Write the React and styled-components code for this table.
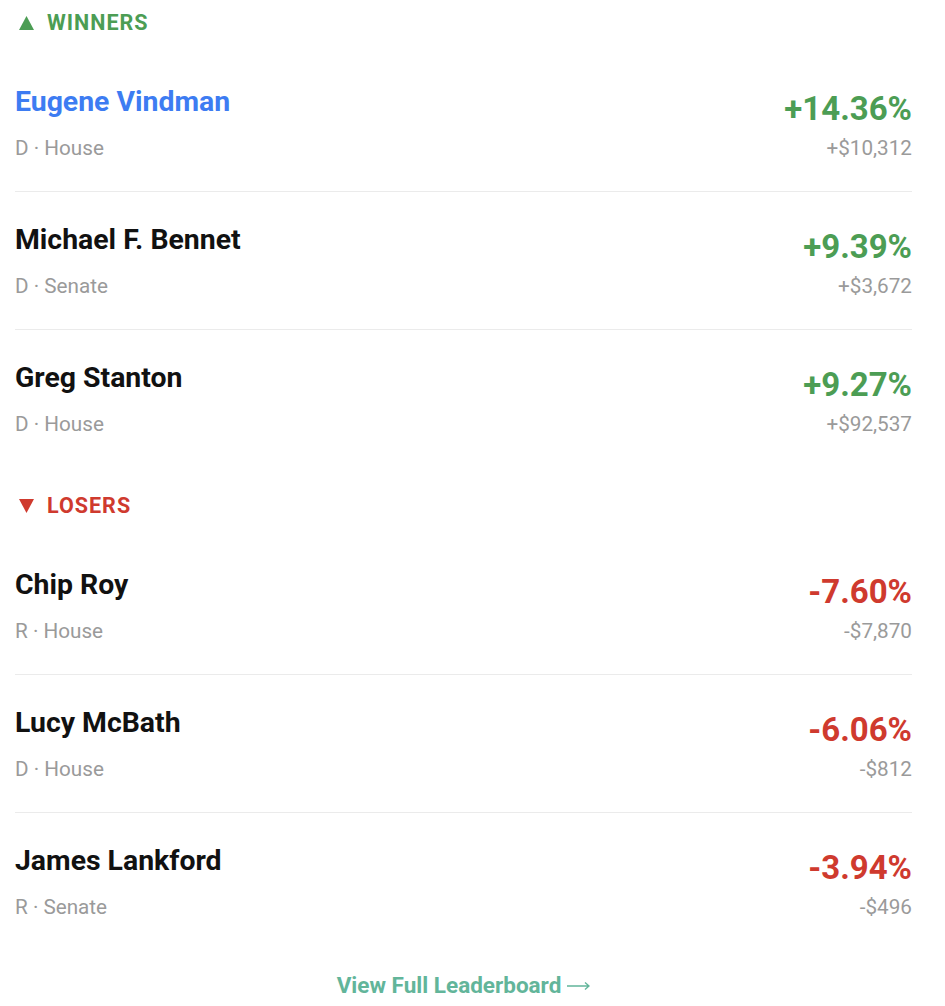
import React from "react";
import styled, { createGlobalStyle } from "styled-components";

const GlobalStyle = createGlobalStyle`
  body {
    margin: 0;
    background: #fff;
    font-family: Roboto, "Liberation Sans", sans-serif;
  }
`;

const GREEN = "#4c9d54";
const RED = "#cf3a2e";

const Wrapper = styled.div`
  width: 897px;
  padding: 11px 0 0 15px;
`;

const Section = styled.section`
  & + & {
    margin-top: 27px;
  }
`;

const Heading = styled.h3`
  display: flex;
  align-items: center;
  gap: 13px;
  margin: 0 0 19px;
  padding-left: 4px;
  font-size: 21.5px;
  line-height: 24px;
  font-weight: 700;
  letter-spacing: 1px;
  text-transform: uppercase;
  color: ${(p) => (p.$up ? GREEN : RED)};
`;

const Triangle = styled.svg`
  width: 15px;
  height: 14px;
  flex-shrink: 0;
  fill: currentColor;
`;

const Row = styled.div`
  display: flex;
  justify-content: space-between;
  align-items: flex-end;
  padding: 31px 0 30px;
  border-bottom: 1px solid #ebebeb;
  &:last-child {
    border-bottom: none;
  }
`;

const Left = styled.div`
  display: flex;
  flex-direction: column;
  gap: 16px;
`;

const Right = styled.div`
  display: flex;
  flex-direction: column;
  align-items: flex-end;
  gap: 7px;
`;

const Name = styled.a`
  font-size: 28.4px;
  line-height: 34px;
  font-weight: 700;
  color: ${(p) => (p.$active ? "#3d7cf2" : "#111")};
  text-decoration: none;
`;

const Meta = styled.div`
  font-size: 20.7px;
  line-height: 26px;
  color: #9a9a9a;
`;

const Pct = styled.div`
  font-size: 33px;
  line-height: 39px;
  font-weight: 700;
  color: ${(p) => (p.$up ? GREEN : RED)};
`;

const Footer = styled.div`
  display: flex;
  justify-content: center;
  padding: 22px 0 20px;
`;

const FooterLink = styled.a`
  display: flex;
  align-items: center;
  gap: 6px;
  font-size: 22.5px;
  font-weight: 700;
  color: #62b59a;
  text-decoration: none;
`;

const Arrow = styled.svg`
  width: 23px;
  height: 10px;
  margin-top: 2px;
  stroke: currentColor;
  stroke-width: 1.4;
  fill: none;
`;

const WINNERS = [
  { name: "Eugene Vindman", meta: "D · House", pct: "+14.36%", amt: "+$10,312", active: true },
  { name: "Michael F. Bennet", meta: "D · Senate", pct: "+9.39%", amt: "+$3,672" },
  { name: "Greg Stanton", meta: "D · House", pct: "+9.27%", amt: "+$92,537" },
];

const LOSERS = [
  { name: "Chip Roy", meta: "R · House", pct: "-7.60%", amt: "-$7,870" },
  { name: "Lucy McBath", meta: "D · House", pct: "-6.06%", amt: "-$812" },
  { name: "James Lankford", meta: "R · Senate", pct: "-3.94%", amt: "-$496" },
];

const Board = ({ title, up, items }) => (
  <Section>
    <Heading $up={up}>
      <Triangle viewBox="0 0 15 14">
        <path d={up ? "M7.5 0 L15 14 L0 14 Z" : "M0 0 L15 0 L7.5 14 Z"} />
      </Triangle>
      {title}
    </Heading>
    {items.map((m) => (
      <Row key={m.name}>
        <Left>
          <Name href="#" $active={m.active}>{m.name}</Name>
          <Meta>{m.meta}</Meta>
        </Left>
        <Right>
          <Pct $up={up}>{m.pct}</Pct>
          <Meta>{m.amt}</Meta>
        </Right>
      </Row>
    ))}
  </Section>
);

const App = () => (
  <Wrapper>
    <GlobalStyle />
    <Board title="Winners" up items={WINNERS} />
    <Board title="Losers" items={LOSERS} />
    <Footer>
      <FooterLink href="#">
        View Full Leaderboard
        <Arrow viewBox="0 0 23 10">
          <path d="M0 5 H22 M18 1.5 L22 5 L18 8.5" />
        </Arrow>
      </FooterLink>
    </Footer>
  </Wrapper>
);

export default App;
